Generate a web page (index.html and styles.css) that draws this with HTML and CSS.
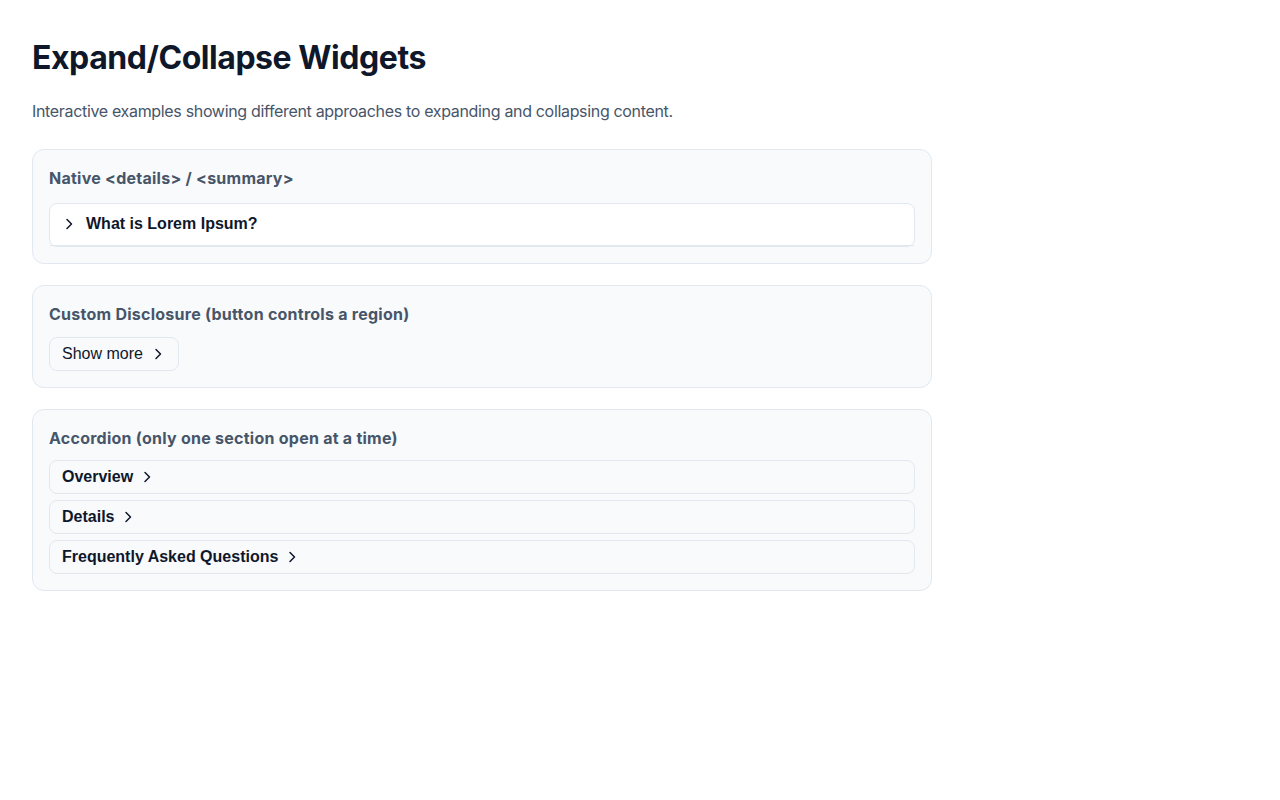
FILE: index.html
```html
<!DOCTYPE html>
<html lang="en">
  <head>
    <meta charset="UTF-8" />
    <meta name="viewport" content="width=device-width, initial-scale=1.0" />
    <title>Expand/Collapse Widgets</title>
    <link rel="stylesheet" href="styles.css">
  </head>
  <body>
    <main class="page">
      <h1 class="page-title">Expand/Collapse Widgets</h1>
      <p class="page-intro">Interactive examples showing different approaches to expanding and collapsing content.</p>

      <section class="card">
        <h2 class="card-title">Native &lt;details&gt; / &lt;summary&gt;</h2>
        <details class="native">
          <summary>
            <svg class="chev" viewBox="0 0 12 12"><path d="M4 1.5 L8.5 6 L4 10.5" /></svg>
            What is Lorem Ipsum?
          </summary>
          <p>Lorem Ipsum is simply dummy text of the printing and typesetting industry.</p>
        </details>
      </section>

      <section class="card">
        <h2 class="card-title">Custom Disclosure (button controls a region)</h2>
        <button class="disclosure" aria-expanded="false" aria-controls="more" onclick="toggleMore(this)">
          <span class="label">Show more</span>
          <svg class="chev" viewBox="0 0 12 12"><path d="M4 1.5 L8.5 6 L4 10.5" /></svg>
        </button>
        <div class="region" id="more" hidden>
          Extra content revealed by the disclosure button.
        </div>
      </section>

      <section class="card">
        <h2 class="card-title">Accordion (only one section open at a time)</h2>
        <div class="accordion" id="accordion">
          <div class="acc-item">
            <button class="acc-head" aria-expanded="false">
              Overview
              <svg class="chev" viewBox="0 0 12 12"><path d="M4 1.5 L8.5 6 L4 10.5" /></svg>
            </button>
            <div class="acc-body" hidden>A short overview of the topic.</div>
          </div>
          <div class="acc-item">
            <button class="acc-head" aria-expanded="false">
              Details
              <svg class="chev" viewBox="0 0 12 12"><path d="M4 1.5 L8.5 6 L4 10.5" /></svg>
            </button>
            <div class="acc-body" hidden>More in-depth details go here.</div>
          </div>
          <div class="acc-item">
            <button class="acc-head" aria-expanded="false">
              Frequently Asked Questions
              <svg class="chev" viewBox="0 0 12 12"><path d="M4 1.5 L8.5 6 L4 10.5" /></svg>
            </button>
            <div class="acc-body" hidden>Answers to common questions.</div>
          </div>
        </div>
      </section>
    </main>
    <script>
      function toggleMore(btn) {
        const region = document.getElementById('more');
        const open = btn.getAttribute('aria-expanded') === 'true';
        btn.setAttribute('aria-expanded', String(!open));
        btn.querySelector('.label').textContent = open ? 'Show more' : 'Show less';
        region.hidden = open;
      }

      const heads = document.querySelectorAll('.acc-head');
      heads.forEach((head) => {
        head.addEventListener('click', () => {
          const wasOpen = head.getAttribute('aria-expanded') === 'true';
          heads.forEach((h) => {
            h.setAttribute('aria-expanded', 'false');
            h.nextElementSibling.hidden = true;
          });
          if (!wasOpen) {
            head.setAttribute('aria-expanded', 'true');
            head.nextElementSibling.hidden = false;
          }
        });
      });
    </script>
  </body>
</html>
```

FILE: styles.css
```css
body {
  margin: 0;
  font-family: Inter, "Liberation Sans", Arial, sans-serif;
  color: #0f172a;
  background: #ffffff;
}
.page {
  width: 900px;
  padding: 32px;
}
.page-title {
  margin: 0 0 15px;
  font-size: 32px;
  font-weight: 700;
  line-height: 52px;
  letter-spacing: -0.45px;
  color: #0f172a;
}
.page-intro {
  margin: 0 0 26px;
  font-size: 16px;
  line-height: 24px;
  letter-spacing: -0.33px;
  color: #475569;
}
.card {
  background: #f8fafc;
  border: 1px solid #e2e8f0;
  border-radius: 12px;
  padding: 16px;
  margin-bottom: 21px;
}
.card-title {
  margin: 0 0 10px;
  font-size: 16px;
  font-weight: 700;
  line-height: 24px;
  letter-spacing: 0.25px;
  color: #475569;
}
.chev {
  width: 12px;
  height: 12px;
  flex: none;
}
.chev path {
  fill: none;
  stroke: #0f172a;
  stroke-width: 1.5;
  stroke-linecap: round;
  stroke-linejoin: round;
}
.native {
  margin-top: 13px;
  background: #ffffff;
  border: 1px solid #e2e8f0;
  border-radius: 8px;
}
.native summary {
  list-style: none;
  display: flex;
  align-items: center;
  gap: 11px;
  padding: 8px 13px 9px;
  line-height: 24px;
  font-family: "Liberation Sans", Arial, sans-serif;
  font-weight: 700;
  cursor: pointer;
  border-bottom: 1px solid #e2e8f0;
}
.native summary::-webkit-details-marker {
  display: none;
}
.native[open] .chev {
  transform: rotate(90deg);
}
.native p {
  margin: 0;
  padding: 12px 16px;
}
button {
  font-family: "Liberation Sans", Arial, sans-serif;
  color: #0f172a;
}
.disclosure {
  display: inline-flex;
  align-items: center;
  gap: 9px;
  margin-top: 1px;
  padding: 5px 14px 5px 12px;
  font-size: 16px;
  line-height: 22px;
  background: #f8fafc;
  border: 1px solid #e2e8f0;
  border-radius: 8px;
  cursor: pointer;
}
.disclosure[aria-expanded="true"] .chev,
.acc-head[aria-expanded="true"] .chev {
  transform: rotate(90deg);
}
.region {
  margin-top: 10px;
  padding: 10px 12px;
  background: #ffffff;
  border: 1px solid #e2e8f0;
  border-radius: 8px;
}
.accordion {
  display: flex;
  flex-direction: column;
  gap: 6px;
}
.acc-item {
  border: 1px solid #e2e8f0;
  border-radius: 8px;
  background: #f8fafc;
}
.acc-head {
  display: flex;
  align-items: center;
  gap: 8px;
  width: 100%;
  padding: 5px 12px;
  font-size: 16px;
  font-weight: 700;
  line-height: 22px;
  background: none;
  border: none;
  text-align: left;
  cursor: pointer;
}
.acc-body {
  padding: 8px 12px 12px;
  font-family: Inter, "Liberation Sans", Arial, sans-serif;
  color: #475569;
}
```
